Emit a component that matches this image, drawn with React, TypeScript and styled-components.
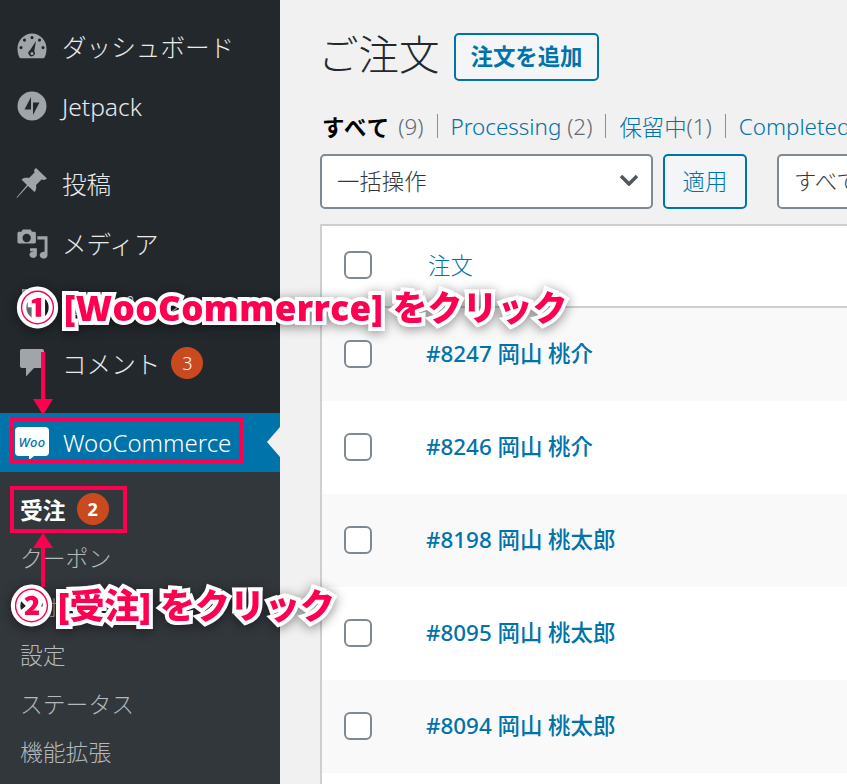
import { ReactNode } from "react";
import styled, { createGlobalStyle } from "styled-components";

const jpStack = `"Noto Sans", "Noto Sans CJK JP", sans-serif`;

const GlobalStyle = createGlobalStyle`
  html, body {
    margin: 0;
    padding: 0;
    background: #f1f1f1;
    font-family: ${jpStack};
  }
  * { box-sizing: border-box; }
`;

const Page = styled.div`
  position: relative;
  display: grid;
  grid-template-columns: 280px 1fr;
  width: 847px;
  height: 784px;
  overflow: hidden;
`;

const Sidebar = styled.nav`
  background: #23282d;
  padding-top: 17px;
  display: flex;
  flex-direction: column;
`;

const MenuItem = styled.div<{ $gapAfter?: boolean }>`
  height: 60px;
  display: flex;
  align-items: center;
  gap: 14px;
  padding: 0 0 2px 16px;
  margin-bottom: ${(p) => (p.$gapAfter ? "17px" : "0")};
  color: #e8eaeb;
  font-size: 24.6px;
  font-weight: 300;
`;

const IconSlot = styled.span`
  width: 32px;
  height: 32px;
  flex: none;
  display: flex;
  align-items: center;
  justify-content: center;
  color: #a0a5aa;
`;

const Badge = styled.span`
  width: 32px;
  height: 32px;
  border-radius: 50%;
  background: #ca4a1f;
  color: #fff;
  font-size: 18px;
  display: flex;
  align-items: center;
  justify-content: center;
  margin-left: -3px;
`;

const WooRow = styled.div`
  position: relative;
  height: 59px;
  margin-top: 19px;
  background: #0073aa;
  display: flex;
  align-items: center;
  gap: 14px;
  padding-left: 15px;
  color: #fff;
  font-size: 24px;
  font-weight: 300;

  &::after {
    content: "";
    position: absolute;
    right: 0;
    top: 14px;
    border: 15px solid transparent;
    border-right: 13px solid #f1f1f1;
    border-left: 0;
  }
`;

const WooLogo = styled.span`
  position: relative;
  width: 34px;
  height: 29px;
  margin-top: -2px;
  background: #fff;
  border-radius: 4px;
  color: #0073aa;
  font-size: 13px;
  font-weight: 500;
  font-style: italic;
  letter-spacing: 0.4px;
  display: flex;
  align-items: center;
  justify-content: center;

  &::after {
    content: "";
    position: absolute;
    left: 14px;
    bottom: -4px;
    border-top: 4px solid #fff;
    border-right: 5px solid transparent;
  }
`;

const SubMenu = styled.div`
  flex: 1;
  background: #32373c;
  padding-top: 13px;
  display: flex;
  flex-direction: column;
`;

const SubItem = styled.div<{ $active?: boolean }>`
  height: 48.5px;
  display: flex;
  align-items: center;
  gap: 11px;
  padding-left: 20px;
  color: ${(p) => (p.$active ? "#fff" : "#b4b9be")};
  font-size: 22.8px;
  font-weight: ${(p) => (p.$active ? 700 : 300)};

  ${Badge} {
    margin-left: 0;
    font-weight: 700;
  }
`;

const Main = styled.main`
  padding: 33px 0 0 40px;
  min-width: 0;
`;

const TitleRow = styled.div`
  display: flex;
  align-items: center;
  gap: 14.5px;
  height: 48px;
`;

const Title = styled.h1`
  margin: 0 0 0 -2px;
  padding-bottom: 4px;
  font-size: 40.5px;
  font-weight: 300;
  color: #23282d;
  line-height: 48px;
`;

const AddButton = styled.button`
  height: 48px;
  width: 145px;
  padding: 0 0 4px;
  border: 2px solid #0073aa;
  border-radius: 5px;
  background: #f3f5f6;
  color: #0073aa;
  font-family: inherit;
  font-size: 22.4px;
  font-weight: 700;
`;

const Filters = styled.div`
  margin-top: 29px;
  height: 36px;
  display: flex;
  align-items: center;
  white-space: nowrap;
  font-size: 22.4px;
  font-weight: 300;
  color: #646970;
  padding: 0 0 4px 2px;
  overflow: hidden;
`;

const FilterCurrent = styled.strong`
  color: #000;
  font-weight: 700;
  letter-spacing: 1.2px;
  margin-right: 8px;
`;

const FilterLink = styled.span`
  color: #0073aa;
`;

const FilterSep = styled.span`
  flex: none;
  width: 1px;
  height: 24px;
  background: #a5876e;
  margin: 0 13px;
`;

const Toolbar = styled.div`
  margin-top: 8px;
  display: flex;
  gap: 10px;
  white-space: nowrap;
`;

const Select = styled.div<{ $w: number; $gap?: number }>`
  flex: none;
  width: ${(p) => p.$w}px;
  height: 55px;
  margin-left: ${(p) => p.$gap ?? 0}px;
  padding: 0 12px 3px 15px;
  background: #fff;
  border: 2px solid #7e8993;
  border-radius: 5px;
  display: flex;
  align-items: center;
  justify-content: space-between;
  font-size: 22.4px;
  font-weight: 300;
  color: #32373c;
`;

const ApplyButton = styled.button`
  flex: none;
  width: 84px;
  height: 55px;
  padding: 0 0 3px;
  border: 2px solid #0073aa;
  border-radius: 5px;
  background: #f3f5f6;
  color: #0073aa;
  font-family: inherit;
  font-size: 22.4px;
  font-weight: 300;
`;

const Table = styled.div`
  margin-top: 15px;
  margin-right: -40px;
  border-top: 2px solid #ccd0d4;
  border-left: 2px solid #ccd0d4;
  background: #fff;
`;

const HeaderRow = styled.div`
  height: 82px;
  display: flex;
  align-items: flex-start;
  gap: 56px;
  padding: 25px 0 0 22px;
  border-bottom: 2px solid #ccd0d4;
  color: #0073aa;
  font-size: 22.4px;
  font-weight: 300;
  line-height: 30px;
`;

const Row = styled.div<{ $odd: boolean }>`
  height: 93px;
  display: flex;
  align-items: flex-start;
  gap: 54px;
  padding: 32px 0 0 22px;
  background: ${(p) => (p.$odd ? "#f9f9f9" : "#fff")};
  color: #0073aa;
  font-size: 22.4px;
  font-weight: 500;
  line-height: 28px;
`;

const Check = styled.span`
  flex: none;
  width: 28px;
  height: 28px;
  background: #fff;
  border: 2px solid #7e8993;
  border-radius: 6px;
`;

const Callout = styled.div<{ $x: number; $y: number }>`
  position: absolute;
  left: ${(p) => p.$x}px;
  top: ${(p) => p.$y}px;
  white-space: nowrap;
  font-family: "Open Sans", "Noto Sans CJK JP", sans-serif;
  font-size: 35px;
  font-weight: 800;
  line-height: 44px;
  color: #ff0050;
  -webkit-text-stroke: 8px #fff;
  paint-order: stroke fill;
  filter: drop-shadow(0 2px 6px rgba(0, 0, 0, 0.45));
`;

const CalloutLatin = styled.span`
  letter-spacing: 0.4px;
`;

const Frame = styled.div<{ $x: number; $y: number; $w: number; $h: number }>`
  position: absolute;
  left: ${(p) => p.$x}px;
  top: ${(p) => p.$y}px;
  width: ${(p) => p.$w}px;
  height: ${(p) => p.$h}px;
  border: 4px solid #ff0050;
`;

const ArrowSvg = styled.svg<{ $y: number }>`
  position: absolute;
  left: 33px;
  top: ${(p) => p.$y}px;
`;

const GaugeIcon = () => (
  <svg width="30" height="26" viewBox="0 0 30 26" fill="currentColor">
    <path
      fillRule="evenodd"
      d="M15 .5C7 .5.5 7.500.5 15.500c0 3.500.7 6.500 2 9 .3.500.8.800 1.400.800h22.200c.6 0 1.100-.3 1.400-.800 1.300-2.500 2-5.500 2-9C29.500 7.500 23 .5 15 .5zM15 3a1.600 1.600 0 1 1 0 3.200A1.600 1.600 0 0 1 15 3zM7.500 5.500a1.600 1.600 0 1 1 0 3.200 1.600 1.600 0 0 1 0-3.200zm15 0a1.600 1.600 0 1 1 0 3.200 1.600 1.600 0 0 1 0-3.200zM4 13a1.600 1.600 0 1 1 0 3.200A1.600 1.600 0 0 1 4 13zm22 0a1.600 1.600 0 1 1 0 3.200 1.600 1.600 0 0 1 0-3.200zM19 8l-1.800 10.200a3.200 3.200 0 1 1-4.200-.9L19 8zM15 19a1.500 1.500 0 1 0 0 3 1.500 1.500 0 0 0 0-3z"
    />
  </svg>
);

const JetpackIcon = () => (
  <svg width="30" height="30" viewBox="0 0 30 30" fill="currentColor">
    <path
      fillRule="evenodd"
      d="M15 .5a14.500 14.500 0 1 0 0 29 14.500 14.500 0 0 0 0-29zM14 6v12.500H7.500L14 6zm2 5.500h6.500L16 24V11.500z"
    />
  </svg>
);

const PinIcon = () => (
  <svg width="32" height="32" viewBox="0 0 32 32" fill="currentColor">
    <path d="M20 1l11 10.500-2.500 1.500-3-.5-5.500 5.500c.7 3 0 5.500-1.500 7L12 19 1 31l-.5-.5L11 18 5.500 12.500c1.500-1.500 4.500-2.200 7.500-1.500l5.500-5.500-.5-2.500L20 1z" />
  </svg>
);

const MediaIcon = () => (
  <svg width="33" height="33" viewBox="0 0 33 33" fill="currentColor">
    <path
      fillRule="evenodd"
      d="M7 2h8l1.500 2.500H19c.8 0 1.500.7 1.500 1.500v9c0 .8-.7 1.500-1.500 1.500H3c-.8 0-1.500-.7-1.500-1.500V6c0-.8.7-1.500 1.500-1.500h2.500L7 2zm4 4.500a4.300 4.300 0 1 0 0 8.600 4.300 4.300 0 0 0 0-8.600z"
    />
    <path d="M22 9h10.500v19.500a4 3.500 0 1 1-3-3.400V12.500H22V9zM14.500 21.500h7V28a3.800 3.300 0 1 1-3-3.200v-.3h-4v-3z" />
  </svg>
);

const PageIcon = () => (
  <svg width="28" height="30" viewBox="0 0 28 30" fill="currentColor">
    <path d="M4 1h14v5h6v23H4V1z" />
  </svg>
);

const CommentIcon = () => (
  <svg width="26" height="30" viewBox="0 0 26 30" fill="currentColor">
    <path d="M3 1h20c1.200 0 2 .8 2 2v15c0 1.200-.8 2-2 2H15l-8 8.500V20H3c-1.200 0-2-.8-2-2V3c0-1.200.8-2 2-2z" />
  </svg>
);

const Chevron = () => (
  <svg width="20" height="12" viewBox="0 0 20 12" fill="none" stroke="#50575e" strokeWidth="3.500">
    <path d="M2 2l8 8 8-8" />
  </svg>
);

const menuTop: { icon: ReactNode; label: string; gapAfter?: boolean; badge?: string }[] = [
  { icon: <GaugeIcon />, label: "ダッシュボード" },
  { icon: <JetpackIcon />, label: "Jetpack", gapAfter: true },
  { icon: <PinIcon />, label: "投稿" },
  { icon: <MediaIcon />, label: "メディア" },
  { icon: <PageIcon />, label: "固定ページ" },
  { icon: <CommentIcon />, label: "コメント", badge: "3" },
];

const subMenu = ["クーポン", "レポート", "設定", "ステータス", "機能拡張"];

const orders = [
  "#8247 岡山 桃介",
  "#8246 岡山 桃介",
  "#8198 岡山 桃太郎",
  "#8095 岡山 桃太郎",
  "#8094 岡山 桃太郎",
  "",
];

function App() {
  return (
    <Page>
      <GlobalStyle />
      <Sidebar>
        {menuTop.map((item) => (
          <MenuItem key={item.label} $gapAfter={item.gapAfter}>
            <IconSlot>{item.icon}</IconSlot>
            {item.label}
            {item.badge && <Badge>{item.badge}</Badge>}
          </MenuItem>
        ))}
        <WooRow>
          <WooLogo>Woo</WooLogo>
          WooCommerce
        </WooRow>
        <SubMenu>
          <SubItem $active>
            受注
            <Badge>2</Badge>
          </SubItem>
          {subMenu.map((label) => (
            <SubItem key={label}>{label}</SubItem>
          ))}
        </SubMenu>
      </Sidebar>

      <Main>
        <TitleRow>
          <Title>ご注文</Title>
          <AddButton>注文を追加</AddButton>
        </TitleRow>
        <Filters>
          <FilterCurrent>すべて</FilterCurrent>(9)
          <FilterSep />
          <FilterLink>Processing</FilterLink>&nbsp;(2)
          <FilterSep />
          <FilterLink>保留中</FilterLink>(1)
          <FilterSep />
          <FilterLink>Completed</FilterLink>
        </Filters>
        <Toolbar>
          <Select $w={333}>
            一括操作
            <Chevron />
          </Select>
          <ApplyButton>適用</ApplyButton>
          <Select $w={300} $gap={20}>
            すべての日付
          </Select>
        </Toolbar>
        <Table>
          <HeaderRow>
            <Check />
            注文
          </HeaderRow>
          {orders.map((order, i) => (
            <Row key={i} $odd={i % 2 === 0}>
              {order && <Check />}
              {order}
            </Row>
          ))}
        </Table>
      </Main>

      <ArrowSvg $y={352} width="20" height="63" viewBox="0 0 20 63" fill="#ff0050">
        <path d="M8 0h4v47h8L10 63 0 47h8z" />
      </ArrowSvg>
      <ArrowSvg $y={533} width="20" height="54" viewBox="0 0 20 54" fill="#ff0050">
        <path d="M10 0l10 15h-8v39H8V15H0z" />
      </ArrowSvg>
      <Frame $x={10} $y={417} $w={233} $h={46} />
      <Frame $x={10} $y={486} $w={117} $h={47} />
      <Callout $x={20} $y={286}>
        ① <CalloutLatin>[WooCommerrce]</CalloutLatin> をクリック
      </Callout>
      <Callout $x={14} $y={584}>
        ② [受注] をクリック
      </Callout>
    </Page>
  );
}

export default App;
